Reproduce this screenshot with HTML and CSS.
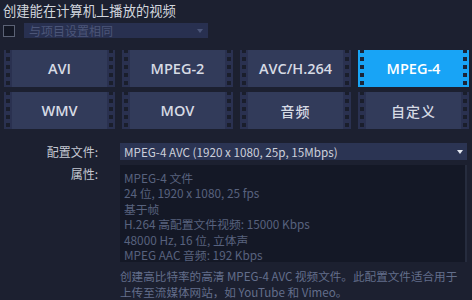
FILE: index.html
```html
<!DOCTYPE html>
<html lang="zh-CN">
<head>
<meta charset="utf-8">
<link rel="stylesheet" href="styles.css">
</head>
<body>
<div class="page">
  <h1 class="title">创建能在计算机上播放的视频</h1>
  <div class="same-row">
    <span class="checkbox"></span>
    <div class="select disabled">
      <span>与项目设置相同</span>
      <span class="caret dim"></span>
    </div>
  </div>
  <div class="tiles">
    <div class="tile"><span class="strip"><i></i></span><span class="label">AVI</span><span class="strip"><i></i></span></div>
    <div class="tile"><span class="strip"><i></i></span><span class="label">MPEG-2</span><span class="strip"><i></i></span></div>
    <div class="tile"><span class="strip"><i></i></span><span class="label">AVC/H.264</span><span class="strip"><i></i></span></div>
    <div class="tile active"><span class="strip"><i></i></span><span class="label">MPEG-4</span><span class="strip"><i></i></span></div>
    <div class="tile"><span class="strip"><i></i></span><span class="label">WMV</span><span class="strip"><i></i></span></div>
    <div class="tile"><span class="strip"><i></i></span><span class="label">MOV</span><span class="strip"><i></i></span></div>
    <div class="tile"><span class="strip"><i></i></span><span class="label cjk">音频</span><span class="strip"><i></i></span></div>
    <div class="tile"><span class="strip"><i></i></span><span class="label cjk">自定义</span><span class="strip"><i></i></span></div>
  </div>
  <div class="form">
    <div class="flabel">配置文件:</div>
    <div class="select profile">
      <span>MPEG-4 AVC (1920 x 1080, 25p, 15Mbps)</span>
      <span class="caret"></span>
    </div>
    <div class="flabel">属性:</div>
    <div class="props">
      <div>MPEG-4 文件</div>
      <div>24 位, 1920 x 1080, 25 fps</div>
      <div>基于帧</div>
      <div>H.264 高配置文件视频: 15000 Kbps</div>
      <div>48000 Hz, 16 位, 立体声</div>
      <div>MPEG AAC 音频: 192 Kbps</div>
    </div>
    <div></div>
    <p class="desc">创建高比特率的高清 MPEG-4 AVC 视频文件。此配置文件适合用于<br>上传至流媒体网站，如 YouTube 和 Vimeo。</p>
  </div>
</div>
</body>
</html>
```
FILE: styles.css
```css
html, body {
  margin: 0;
  padding: 0;
  background: #1c2030;
  width: 472px;
  height: 300px;
  overflow: hidden;
}
body {
  font-family: "Noto Sans CJK SC", "Noto Sans", sans-serif;
  color: #cfd3dc;
}
.page {
  display: flex;
  flex-direction: column;
}
.title {
  margin: 0;
  padding: 1px 0 0 3px;
  font-size: 13.3px;
  font-weight: 400;
  line-height: 20px;
  height: 21px;
  color: #d2d6de;
}
.same-row {
  display: flex;
  align-items: center;
  gap: 9px;
  padding-left: 3px;
  height: 15px;
  margin-top: 1px;
}
.checkbox {
  width: 10px;
  height: 10px;
  border: 1px solid #5b6275;
  background: #131724;
}
.select {
  display: flex;
  align-items: center;
  justify-content: space-between;
  box-sizing: border-box;
}
.select.disabled {
  width: 184px;
  height: 15px;
  background: #283050;
  color: #4c5679;
  font-size: 12px;
  padding: 0 5px 0 5px;
}
.caret {
  width: 0;
  height: 0;
  border-left: 3.5px solid transparent;
  border-right: 3.5px solid transparent;
  border-top: 4px solid #e4e8f0;
}
.caret.dim { border-top-color: #4c5679; }

.tiles {
  display: grid;
  grid-template-columns: repeat(4, 111px);
  grid-auto-rows: 37px;
  column-gap: 7px;
  row-gap: 5px;
  padding-left: 4px;
  margin-top: 12px;
}
.tile {
  display: flex;
  background: #323b5a;
}
.tile .strip {
  width: 8px;
  background: #2a3150;
  display: flex;
  justify-content: center;
  overflow: hidden;
}
.tile .strip i {
  width: 4px;
  margin-top: -1px;
  background: repeating-linear-gradient(to bottom, #1a1e2c 0 4px, transparent 4px 8px);
}
.tile .label {
  flex: 1;
  display: flex;
  align-items: center;
  justify-content: center;
  font-family: "Open Sans", "Noto Sans CJK SC", sans-serif;
  font-size: 14.5px;
  font-weight: 600;
  color: #d6dae4;
}
.tile .label.cjk {
  font-family: "Noto Sans CJK SC", sans-serif;
  font-size: 14px;
  font-weight: 500;
  letter-spacing: 1px;
}
.tile.active, .tile.active .strip { background: #18a4f6; }
.tile.active .strip i {
  background: repeating-linear-gradient(to bottom, #1b2538 0 4px, transparent 4px 8px);
}
.tile.active .label { color: #ffffff; }

.form {
  display: grid;
  grid-template-columns: 98px 347px;
  column-gap: 22px;
  row-gap: 5px;
  margin-top: 14px;
  font-size: 12px;
}
.flabel {
  text-align: right;
  color: #c4c8d2;
  line-height: 17px;
}
.select.profile {
  height: 17px;
  background: #2b3453;
  color: #cbcfda;
  padding: 0 4px 0 4px;
  line-height: 17px;
  font-size: 11.7px;
}
.props {
  height: 97px;
  box-sizing: border-box;
  background: #141826;
  border-right: 2px solid #262c3e;
  padding: 5px 4px 0 4px;
  color: #58627e;
  line-height: 15.4px;
  font-size: 11.8px;
  overflow: hidden;
}
.desc {
  margin: 2px 0 0 0;
  color: #636e8b;
  line-height: 15.5px;
  font-size: 11.6px;
  white-space: nowrap;
}
```
